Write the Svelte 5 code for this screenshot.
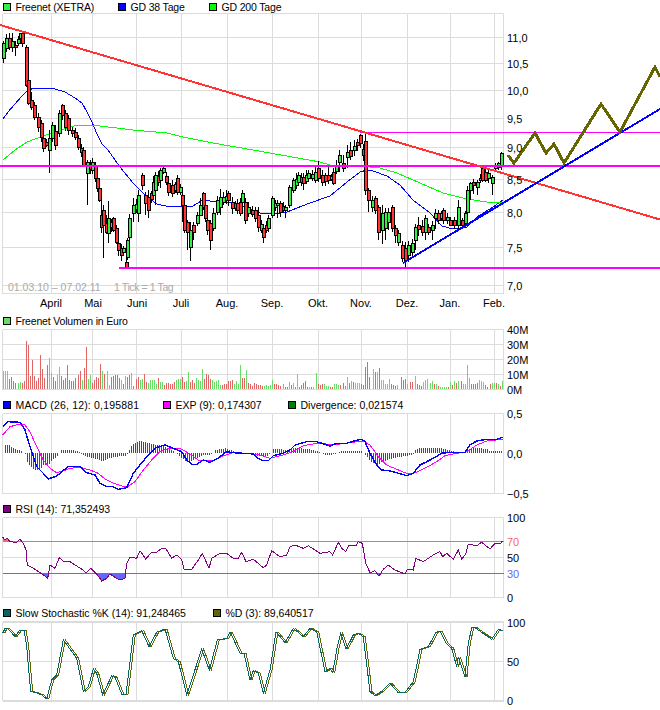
<script>
  const Z = (pts, ox = 0, oy = 0) => pts.map(([u, v]) => [ox + u / 3, oy + v / 3]);
  const str = (pts) => pts.map(([x, y]) => `${x.toFixed(1)},${y.toFixed(1)}`).join(' ');

  const vGrid = [2.5, 51.5, 92.5, 136.5, 181.5, 227.5, 272.5, 318.5, 361.5, 407.5, 450.5, 494.5, 503.5];
  const months = [['April', 51], ['Mai', 93], ['Juni', 137], ['Juli', 181], ['Aug.', 227], ['Sep.', 272], ['Okt.', 318], ['Nov.', 361], ['Dez.', 407], ['Jan.', 450], ['Feb.', 494]];
  const priceAxis = [['11,0', 37.5], ['10,5', 63.5], ['10,0', 90.5], ['9,5', 118.5], ['9,0', 147.5], ['8,5', 179.5], ['8,0', 212.5], ['7,5', 247.5], ['7,0', 285.5]];
  const volAxis = [['40M', 329.5], ['30M', 344.5], ['20M', 359.5], ['10M', 374.5], ['0M', 389.5]];
  const macdAxis = [['0,5', 413.5], ['0,0', 453.5], ['−0,5', 493.5]];
  const stochAxis = [['100', 622.5], ['50', 661.5], ['0', 700.5]];

  // x, top, bottom, colour (r/g), wick top, wick bottom
  const keyCandles = [
    [3,43,58,'g',41,63],[6,38,48,'g',34,52],[9,38,47,'r',33,50],[12,41,47,'g',33,52],[15,45,47,'r',41,56],[18,39,43,'g',36,46],[20,33,38,'g',33,40],[22,33,43,'r',31,47],
    [26,47,85,'r',45,87],[28,80,103,'r',77,105],[31,100,107,'r',92,110],[34,105,117,'r',102,120],[38,117,127,'r',113,132],[41,123,137,'r',120,142],[43,138,148,'r',135,152],
    [49,138,150,'g',130,173],[52,125,138,'g',122,142],[55,131,145,'r',125,150],[59,113,133,'g',110,137],[62,105,115,'r',104,120],[65,113,127,'r',110,131],[68,118,130,'r',115,135],
    [72,130,133,'r',127,137],[75,132,137,'r',128,140],[78,138,147,'r',135,150],[83,150,165,'r',147,167],[87,162,173,'g',160,205],[92,162,170,'g',158,174],[95,165,178,'r',162,182],
    [97,178,188,'r',176,192],[99,188,200,'r',185,202],[101,215,227,'r',201,233],[103,210,225,'r',205,258],[106,223,232,'r',215,234],[108,218,233,'g',201,243],[113,218,230,'r',217,232],
    [116,228,242,'r',225,244],[118,243,250,'r',241,256],[121,248,255,'r',244,261],[123,248,252,'g',246,256],[126,262,267,'r',256,268],[127,240,257,'g',238,260],[129,218,237,'g',214,240],
    [133,205,213,'g',198,222],[138,195,213,'g',190,222],[142,175,185,'r',173,190],[145,195,203,'r',192,215],[148,197,210,'r',190,218],[153,182,195,'g',176,200],[155,175,190,'g',172,205],
    [160,170,180,'g',168,188],[163,168,172,'g',165,174],[168,183,192,'r',178,196],[172,185,193,'r',180,197],[177,178,192,'r',175,195],[180,187,192,'g',184,195],[182,195,205,'r',192,222],
    [184,205,230,'r',203,233],[187,222,232,'r',220,250],[190,230,247,'g',222,261],[193,225,232,'r',222,240],[197,215,223,'g',212,226],[200,205,215,'g',198,216],[203,193,207,'r',192,210],
    [205,205,218,'r',203,222],[207,220,230,'r',217,235],[210,223,240,'r',220,250],[213,213,228,'g',208,231],[217,200,212,'g',196,215],[220,197,207,'g',189,215],[223,197,202,'g',192,205],
    [228,193,200,'r',191,206],[232,202,208,'r',197,214],[237,203,210,'r',199,214],[240,202,213,'r',198,216],[242,193,202,'g',190,205],[245,202,220,'r',198,224],[248,207,213,'g',202,217],
    [255,210,218,'r',207,222],[258,215,227,'r',207,232],[263,228,237,'r',225,243],[268,218,228,'g',215,232],[272,198,215,'g',196,218],[277,203,205,'g',200,218],[280,203,212,'r',201,217],
    [285,207,210,'g',205,218],[289,187,205,'g',185,208],[293,180,190,'g',178,193],[298,175,182,'g',172,184],[303,177,183,'r',173,190],[308,173,178,'g',170,180],[315,172,180,'g',165,183],
    [318,168,178,'r',161,182],[322,175,182,'r',170,186],[328,175,180,'r',165,184],[333,172,183,'r',168,185],[339,155,162,'g',150,172],[343,163,168,'r',155,172],[347,152,157,'g',145,168],
    [350,150,156,'r',142,160],[354,146,150,'g',140,156],[360,135,143,'r',134,148],[365,141,190,'r',134,195],[368,190,200,'r',188,212],[372,200,207,'g',196,212],[375,198,210,'r',196,214],
    [378,207,232,'r',205,240],[382,213,230,'g',205,244],[385,212,228,'g',208,240],[388,212,222,'g',208,230],[392,207,228,'r',205,232],[395,228,235,'r',225,243],[398,233,242,'g',230,246],
    [402,245,258,'r',241,262],[405,248,260,'r',242,268],[408,245,255,'g',241,262],[412,243,252,'g',239,256],[415,227,240,'g',224,250],[418,225,229,'r',217,236],[422,226,232,'r',220,236],
    [425,218,232,'g',215,240],[428,227,232,'r',224,235],[432,225,230,'g',221,240],[435,213,218,'g',209,229],[438,213,220,'r',210,224],[443,210,220,'r',208,224],[447,217,220,'g',213,224],
    [450,220,225,'r',217,226],[454,220,225,'r',217,229],[458,207,225,'g',200,229],[462,220,225,'r',218,228],[465,213,223,'g',211,228],[467,190,212,'g',186,215],[470,183,190,'g',182,200],
    [473,182,185,'r',179,194],[477,182,187,'g',180,195],[482,168,180,'r',165,182],[485,172,180,'r',168,182],[488,173,178,'g',170,183],[492,177,183,'g',175,195],[495,165,168,'g',163,172],
    [498,163,167,'g',162,170],[501,153,165,'g',152,170]
  ];
  let seed = 7;
  const rnd = () => { seed = (seed * 16807) % 2147483647; return seed / 2147483647; };
  const candles = [];
  const sorted = [...keyCandles].sort((a, b) => a[0] - b[0]);
  sorted.forEach((k, i) => {
    candles.push(k);
    const n = sorted[i + 1];
    if (n && n[0] - k[0] >= 5) {
      const mid = (k[1] + k[2] + n[1] + n[2]) / 4;
      const h = 2 + rnd() * 4;
      const t = mid - h / 2;
      candles.push([Math.round((k[0] + n[0]) / 2), t, t + h, rnd() > 0.5 ? 'r' : 'g', t - 2 - rnd() * 4, t + h + 2 + rnd() * 4]);
    }
  });
  const candleView = candles.map(([x, t, b, c, wt, wb]) => ({
    x: Math.round(x), t: Math.round(t), b: Math.round(b), c, wt: Math.round(wt), wb: Math.round(wb)
  }));

  const gd38 = [[3,119],[8,112],[15,104],[22,96],[28,90],[35,88],[45,88],[55,89],[65,92],[75,98],[82,103],[87,112],[92,122],[97,134],[102,144],[108,150],[120,167],[133,183],[147,197],[157,204],[170,207],[182,206],[193,206],[203,200],[217,202],[233,203],[247,208],[260,213],[273,214],[287,212],[297,208],[310,203],[330,196],[347,182],[360,172],[367,170],[373,171],[387,176],[400,185],[413,200],[430,213],[442,226],[453,229],[467,227],[477,217],[493,207],[503,200]];
  const gd200 = [[3,160],[15,150],[27,142],[43,136],[67,128],[78,125],[100,126],[133,130],[167,133],[183,137],[213,143],[253,150],[320,162],[330,165],[360,166],[380,168],[397,173],[420,183],[443,193],[467,199],[487,202],[503,202]];
  const olive = [[508,155],[514,163],[535,133],[546,153],[554,144],[564,163],[601,104],[620,132],[655,67],[660,77]];

  const parseBars = (s, ox) => s.trim().split(/\s+/).map((t) => {
    const m = t.match(/(\d+)([rg])(\d+)/);
    return { x: Math.round(ox + +m[1] / 3), h: +m[3], c: m[2] };
  });
  const bars = [
    ...parseBars(`10g18 16g18 22g18 28r10 34r12 40r8 46r6 55g6 61g7 67r6 73r8 79r48 85r44 91r13 97r29 103r13 109r8 115r11 121r34 127r20 133r11 142r24 148g31 154g16 160r12 166r8 172g14 178g22 184r13 190r9 196r11 202r24 208r9 214r8 220r8 226r11 235r14 241r18 247g9 253r21 259r42 265g10 271g14 277r6 283r9 289r12 295r11 301r25 307g18 313r15 322g18 328g4 334r12 340r13 346r14 352r14 358r11 364g9 370r5 376g13 382r12 388r14 394g16 400r3 409r10 415r12 421g9 427g10 433r15 439r7 445g6 451g9 457g9 463g9 469g5 475r11 481g7 487g7 493r4 499r6 505r6 511r5 517r5 523r7 529g9 535g10 541g10 547r12 553r7 559g8 565g17 571r7 577r9 583r6 589g11 595g9 601g8 607g20 613r10 619r15 625r14 631r10 637g9 643g7 649g8 655g9 661g4 667r4 673r5 679r5 685r8 691r8 697r9 703g5 709g8 715g5 721g24 727r11 733r11 739g19 745r6 751r5 757r3 763r6 769r5 775r4 781r4 787r3 793g3 799g4 805g3 811g4 817g9 823r5 829r5 835r4 841r3 850g5 856r2 862r2 868g7 874r4 880g6 886r2 892g15 898r2 904r4 910r6 916r8 922r2 928g2 934r2 940g2 949g16 955r5 961r4 967r5 973g5 979g3 985g3`, 0),
    ...parseBars(`0r2 6r2 12g5 18g5 24g4 30r4 40r6 46r3 52g12 58r6 64g8 70r7 76g6 82g6 88g6 94r5 100r4 106r22 112r27 118r12 128g20 134r17 140g17 146r21 152g9 158g9 164g5 170g5 176g10 182r5 188r4 194r3 200g4 214r12 220r9 226r10 232g5 240r7 246r7 256g13 262r5 268r4 274r3 280g7 286g9 292g10 300g6 306g8 312r5 318g5 324r3 330g2 336g2 342g2 348g2 354r2 360g7 366r4 372g8 378r6 384g8 394r8 400g5 406g5 412g24 418g11 424r5 430r5 436r5 442r6 448g9 454g8 460g7 466r4 472r2 480r5 486g6 492g6 498r6 504g5 510r3 516g8`, 330)
  ];

  const macd = [...Z([[8,350],[25,335],[60,337],[75,360],[90,410],[110,470],[130,490],[145,507],[170,498],[185,485],[205,470],[240,470],[260,488],[285,495],[300,520],[320,530],[340,530],[355,538],[380,533],[400,490],[420,465],[440,440],[470,412],[495,405],[520,415],[545,425],[560,450],[575,463],[590,463],[610,450],[630,457],[650,447],[680,425],[700,428],[730,430],[760,432],[775,445],[790,452],[805,452],[820,437],[850,430],[870,420],[885,405],[920,395],[950,395],[975,403],[990,408]], 0, 310),
    ...Z([[20,400],[50,400],[75,392],[95,388],[105,395],[120,430],[140,465],[155,480],[175,482],[200,488],[230,497],[250,490],[270,465],[290,455],[310,445],[335,430],[360,427],[405,427],[420,405],[440,393],[470,388],[500,388],[518,382]], 330, 310)];
  const exp = [...Z([[8,375],[30,350],[60,342],[75,345],[90,365],[110,410],[130,450],[150,475],[170,488],[190,483],[210,475],[240,472],[270,480],[295,490],[315,507],[340,520],[380,532],[405,515],[430,480],[455,450],[480,425],[500,417],[540,415],[570,432],[595,450],[640,453],[670,437],[700,428],[740,430],[780,435],[810,445],[850,435],[880,425],[910,407],[950,400],[990,403]], 0, 310),
    ...Z([[30,402],[60,398],[100,393],[120,405],[145,440],[170,465],[200,478],[235,492],[260,487],[290,472],[320,455],[345,437],[380,430],[410,425],[440,405],[470,393],[518,388]], 330, 310)];

  const divKeys = [...Z([[10,25],[22,25],[28,22],[34,18],[40,14],[46,10],[58,8],[64,6],[70,0],[76,-5],[82,-30],[100,-50],[118,-50],[130,-35],[140,-40],[150,-28],[160,-18],[170,-12],[177,0],[185,10],[215,10],[230,6],[240,0],[250,-8],[290,-18],[310,-25],[320,-18],[340,-12],[375,-8],[383,0],[390,18],[400,28],[410,33],[420,38],[430,33],[450,28],[470,24],[490,20],[510,12],[525,0],[530,-3],[550,-20],[560,-28],[570,-25],[590,-15],[610,-5],[625,-8],[638,0],[645,8],[660,12],[680,14],[700,4],[720,0],[740,-3],[770,-8],[800,-10],[812,0],[820,12],[840,12],[860,8],[880,14],[900,14],[920,12],[950,6],[960,0],[975,-5]]),
    ...Z([[0,-6],[20,0],[30,5],[50,5],[90,7],[100,0],[105,-5],[120,-25],[140,-35],[160,-25],[170,-20],[190,-15],[230,-8],[245,-5],[252,0],[255,8],[270,16],[330,16],[350,10],[375,3],[405,3],[420,15],[440,16],[470,12],[480,5],[518,6]], 330)];
  const divAt = (x) => {
    for (let i = 0; i < divKeys.length - 1; i++) {
      const [a, av] = divKeys[i], [b, bv] = divKeys[i + 1];
      if (x >= a && x <= b) return av + (bv - av) * (x - a) / (b - a || 1);
    }
    return 0;
  };
  const divBars = [];
  for (let x = 3; x <= 503; x += 2) divBars.push({ x, v: Math.round(divAt(x)) });

  const rsi = [...Z([[8,112],[15,120],[22,115],[30,125],[50,127],[60,118],[70,130],[78,150],[82,195],[100,205],[120,218],[135,228],[143,235],[150,195],[165,205],[178,173],[190,183],[210,185],[225,195],[250,210],[258,220],[272,205],[290,222],[305,243],[320,235],[330,222],[345,232],[360,240],[375,235],[380,190],[390,172],[410,175],[420,152],[437,177],[455,157],[470,157],[485,145],[497,145],[515,175],[530,165],[545,180],[552,208],[575,208],[595,180],[607,160],[627,205],[635,175],[660,160],[680,160],[700,175],[715,175],[725,157],[738,185],[760,178],[790,203],[800,195],[815,152],[840,170],[860,165],[870,140],[885,135],[910,145],[925,137],[945,150],[960,160],[990,155]], 0, 500),
    ...Z([[8,165],[25,127],[35,145],[47,155],[55,138],[80,135],[85,125],[97,130],[107,190],[120,218],[135,212],[147,228],[160,208],[175,195],[195,210],[225,222],[232,208],[250,210],[257,175],[280,185],[310,165],[330,155],[338,170],[350,160],[370,178],[385,150],[395,178],[408,160],[415,132],[440,137],[455,127],[480,147],[495,130],[510,132],[518,122]], 330, 500)];
  const rsiHigh = Z([[8,112],[15,120],[22,115],[28,124],[8,124]], 0, 500);
  const rsiLow = [
    Z([[118,220],[135,228],[143,235],[147,220]], 0, 500),
    Z([[285,220],[305,243],[320,235],[330,222],[345,232],[360,240],[375,235],[380,220]], 0, 500),
    Z([[144,220],[147,228],[152,220]], 330, 500)
  ];

  const stochK = [...Z([[8,400],[15,385],[25,387],[45,410],[60,390],[72,390],[80,440],[92,575],[105,577],[125,585],[140,597],[155,540],[170,525],[190,420],[205,440],[230,475],[250,575],[265,560],[280,507],[290,520],[308,585],[335,527],[345,532],[365,582],[378,582],[400,405],[425,392],[447,440],[470,397],[495,387],[520,475],[535,485],[560,585],[605,447],[628,510],[652,420],[680,415],[690,395],[720,460],[732,460],[750,540],[760,512],[775,520],[790,580],[810,510],[828,395],[855,428],[880,385],[910,410],[930,385],[950,395],[975,515],[990,505]], 0, 500),
    ...Z([[8,518],[22,440],[32,400],[48,448],[70,405],[85,400],[100,410],[120,575],[135,587],[160,570],[180,550],[205,578],[225,577],[250,545],[270,448],[295,440],[318,397],[330,393],[350,432],[365,445],[380,500],[385,470],[405,530],[415,430],[425,383],[435,383],[485,418],[505,388],[518,392]], 330, 500)];
  const stochD = stochK.slice(0, -1).map(([x, y]) => [x + 2, y]);
</script>

<div class="page">
  <div class="legend narrow">
    <span class="item w-a"><i class="sw s-price"></i>Freenet (XETRA)</span>
    <span class="item w-b"><i class="sw s-blue"></i>GD 38 Tage</span>
    <span class="item"><i class="sw s-lime"></i>GD 200 Tage</span>
  </div>
  <svg class="plot main" viewBox="0 13 660 300" width="660" height="300">
    <g class="grid">
      {#each vGrid as x}<line x1={x} x2={x} y1="13.5" y2="293.5" />{/each}
      {#each [13.5, 37.5, 63.5, 90.5, 118.5, 147.5, 179.5, 212.5, 247.5, 285.5, 293.5] as y}<line x1="2.5" x2="503.5" y1={y} y2={y} />{/each}
    </g>
    <text class="note" x="8" y="291">01.03.10 – 07.02.11</text>
    <text class="note tight" x="114" y="291">1 Tick = 1 Tag</text>
    <polyline class="line thin ma38" points={str(gd38)} />
    <polyline class="line thin ma200" points={str(gd200)} />
    <g class="candles">
      {#each candleView as k}
        <line class="wick" x1={k.x + 0.5} x2={k.x + 0.5} y1={k.wt} y2={k.wb} />
        <rect class={k.c === 'r' ? 'down' : 'up'} x={k.x - 0.5} y={k.t + 0.5} width="3" height={Math.max(k.b - k.t, 1)} />
      {/each}
    </g>
    <line class="line thin pink" x1="360" x2="660" y1="132.5" y2="132.5" />
    <line class="line thick pink" x1="0" x2="660" y1="166" y2="166" />
    <line class="line thick pink" x1="119" x2="660" y1="268" y2="268" />
    <line class="line thick red" x1="0" x2="660" y1="25" y2="219.5" />
    <line class="line thick blue" x1="403" x2="660" y1="263" y2="109" />
    <polyline class="line olive" points={str(olive)} />
    {#each priceAxis as [t, y]}<text class="ax" x="507" y={y + 4}>{t}</text>{/each}
    {#each months as [t, x]}<text class="ax" text-anchor="middle" x={x} y="307">{t}</text>{/each}
  </svg>

  <div class="legend narrow">
    <span class="item"><i class="sw s-vol"></i>Freenet Volumen in Euro</span>
  </div>
  <svg class="plot" viewBox="0 329 660 68" width="660" height="68">
    <g class="grid">
      {#each vGrid as x}<line x1={x} x2={x} y1="329.5" y2="389.5" />{/each}
      {#each [329.5, 344.5, 359.5, 374.5, 389.5] as y}<line x1="2.5" x2="503.5" y1={y} y2={y} />{/each}
    </g>
    {#each bars as b}
      <rect class={b.c === 'r' ? 'vol-r' : 'vol-g'} x={b.x} y={389 - b.h} width="1" height={b.h} />
    {/each}
    {#each volAxis as [t, y]}<text class="ax" x="507" y={y + 4}>{t}</text>{/each}
  </svg>

  <div class="legend">
    <span class="item w-c"><i class="sw s-blue"></i><span class="wide">MACD (26, 12): 0,195881</span></span>
    <span class="item w-d"><i class="sw s-pink"></i>EXP (9): 0,174307</span>
    <span class="item"><i class="sw s-dgreen"></i>Divergence: 0,021574</span>
  </div>
  <svg class="plot" viewBox="0 413 660 88" width="660" height="88">
    <g class="grid">
      {#each vGrid as x}<line x1={x} x2={x} y1="413.5" y2="493.5" />{/each}
      {#each [413.5, 493.5] as y}<line x1="2.5" x2="503.5" y1={y} y2={y} />{/each}
    </g>
    {#each divBars as b}
      {#if b.v !== 0}
        <rect class="div" x={b.x} y={b.v > 0 ? 453 - b.v : 453} width="1" height={Math.abs(b.v)} />
      {/if}
    {/each}
    <polyline class="line thin pink" points={str(exp)} />
    <polyline class="line macd" points={str(macd)} />
    {#each macdAxis as [t, y]}<text class="ax" x="507" y={y + 4}>{t}</text>{/each}
  </svg>

  <div class="legend">
    <span class="item"><i class="sw s-purple"></i>RSI (14): 71,352493</span>
  </div>
  <svg class="plot" viewBox="0 517 660 88" width="660" height="88">
    <g class="grid">
      {#each vGrid as x}<line x1={x} x2={x} y1="517.5" y2="597.5" />{/each}
      {#each [517.5, 557.5, 597.5] as y}<line x1="2.5" x2="503.5" y1={y} y2={y} />{/each}
    </g>
    <polygon class="fill-high" points={str(rsiHigh)} />
    {#each rsiLow as p}<polygon class="fill-low" points={str(p)} />{/each}
    <line class="line thin lvl70" x1="2.5" x2="503.5" y1="541.5" y2="541.5" />
    <line class="line thin lvl30" x1="2.5" x2="503.5" y1="573.5" y2="573.5" />
    <polyline class="line thin rsi" points={str(rsi)} />
    <text class="ax" x="507" y="521.5">100</text>
    <text class="ax t70" x="507" y="545.5">70</text>
    <text class="ax" x="507" y="561.5">50</text>
    <text class="ax t30" x="507" y="577.5">30</text>
    <text class="ax" x="507" y="601.5">0</text>
  </svg>

  <div class="legend">
    <span class="item w-e"><i class="sw s-teal"></i>Slow Stochastic %K (14): 91,248465</span>
    <span class="item"><i class="sw s-olive"></i>%D (3): 89,640517</span>
  </div>
  <svg class="plot" viewBox="0 621 660 89" width="660" height="89">
    <g class="grid">
      {#each vGrid as x}<line x1={x} x2={x} y1="621.5" y2="700.5" />{/each}
      <line x1="2.5" x2="503.5" y1="661.5" y2="661.5" />
      <line class="edge" x1="2.5" x2="503.5" y1="622" y2="622" />
      <line class="edge" x1="2.5" x2="503.5" y1="701" y2="701" />
    </g>
    <polyline class="line thin sd" points={str(stochD)} />
    <polyline class="line thin sk" points={str(stochK)} />
    {#each stochAxis as [t, y]}<text class="ax" x="507" y={y + 4}>{t}</text>{/each}
  </svg>
</div>

<style>
  :global(body) { margin: 0; background: #fff; }
  .page {
    width: 660px;
    height: 710px;
    overflow: hidden;
    display: flex;
    flex-direction: column;
    font-family: "Liberation Sans", Arial, sans-serif;
  }
  .legend {
    height: 16px;
    display: flex;
    align-items: center;
    padding-left: 3px;
    font-size: 10.5px;
    color: #000;
    white-space: nowrap;
  }
  .legend:first-child { height: 13px; }
  .narrow { letter-spacing: -0.17px; }
  .wide { letter-spacing: 0.18px; }
  .item { display: flex; align-items: center; }
  .w-a { width: 115px; }
  .w-b { width: 91px; }
  .w-c { width: 160px; }
  .w-d { width: 125px; }
  .w-e { width: 210px; }
  .sw {
    width: 6px;
    height: 6px;
    border: 1px solid #000;
    margin-right: 4.5px;
    flex: none;
  }
  .s-price { background: #33ee44; }
  .s-blue { background: #0000ff; }
  .s-lime { background: #00ff00; }
  .s-vol { background: #66dd66; }
  .s-pink { background: #ff00ff; }
  .s-dgreen { background: #008000; }
  .s-purple { background: #800080; }
  .s-teal { background: #006666; }
  .s-olive { background: #666600; }
  .plot { display: block; overflow: visible; flex: none; }
  .grid line {
    stroke: #dcdcdc;
    stroke-width: 1;
    shape-rendering: crispEdges;
  }
  .grid .edge { stroke-width: 2; }
  .line { fill: none; shape-rendering: crispEdges; stroke-linejoin: miter; }
  .thin { stroke-width: 1; }
  .thick { stroke-width: 2; }
  .ma38 { stroke: #0000ff; }
  .ma200 { stroke: #00ff00; }
  .macd { stroke: #0000ff; stroke-width: 1.4; }
  .pink { stroke: #ff00ff; }
  .red { stroke: #ff3333; }
  .blue { stroke: #0000ff; }
  .olive { stroke: #666600; stroke-width: 3; }
  .wick { stroke: #000; stroke-width: 1; shape-rendering: crispEdges; }
  .up, .down { stroke: #000; stroke-width: 1; shape-rendering: crispEdges; }
  .up { fill: #33ee44; }
  .down { fill: #ff3333; }
  .vol-r { fill: #e06666; shape-rendering: crispEdges; }
  .vol-g { fill: #66dd66; shape-rendering: crispEdges; }
  .div { fill: #008000; shape-rendering: crispEdges; }
  .fill-high { fill: #ff6666; shape-rendering: crispEdges; }
  .fill-low { fill: #6666ff; shape-rendering: crispEdges; }
  .lvl70 { stroke: #ff6666; }
  .lvl30 { stroke: #6666ff; }
  .rsi { stroke: #800080; }
  .sk { stroke: #006666; }
  .sd { stroke: #666600; }
  .ax { font-size: 11px; fill: #000; }
  .t70 { fill: #ff6666; }
  .t30 { fill: #6666ff; }
  .note { font-size: 10.5px; fill: #aaaaaa; }
  .tight { letter-spacing: -0.4px; }
</style>
